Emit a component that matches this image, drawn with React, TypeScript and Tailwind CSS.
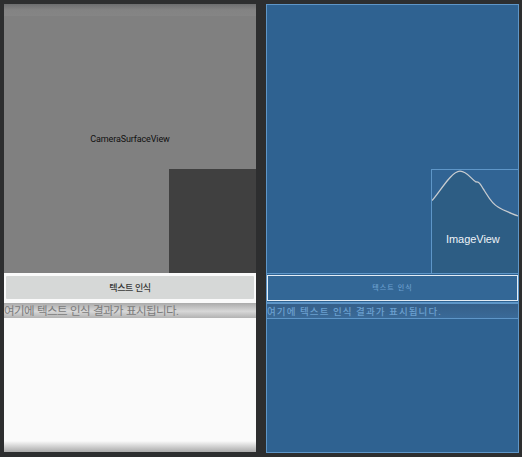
const korean = "font-['Roboto','Noto_Sans_CJK_KR',sans-serif]";

function DesignPreview() {
  return (
    <section className={`flex h-[448px] w-[252px] flex-col overflow-hidden bg-[#fafafa] ${korean}`}>
      <div className="relative flex h-[269px] w-full shrink-0 justify-center bg-[#808080] pt-[129px]">
        <div className="absolute inset-x-0 top-0 h-3 bg-linear-to-b from-[#6d6e6f] via-[#838383] to-[#858585]" />
        <span className="h-3 whitespace-nowrap text-[9px] leading-[12px] tracking-[-0.13px] text-[#101010]">CameraSurfaceView</span>
        <div className="absolute right-0 bottom-0 h-[104px] w-[87px] bg-[#404040]" />
      </div>
      <div className="h-[30px] shrink-0 px-[2px] pt-[3px]">
        <button className="flex h-[23px] w-full items-center justify-center rounded-[1px] bg-[#d6d8d7] pt-px text-[9px] leading-none font-medium tracking-[-0.35px] text-[#383838]">
          <span className="whitespace-nowrap">텍스트 인식</span>
        </button>
      </div>
      <div className="flex h-[15px] shrink-0 items-center bg-linear-to-b from-[#aaaaaa] via-[#d8d8d8] via-55% to-[#b2b2b2]">
        <span className="whitespace-nowrap pt-px text-[11.5px] leading-[15px] tracking-[-0.6px] text-[#7b7b7b] [word-spacing:0.8px]">여기에 텍스트 인식 결과가 표시됩니다.</span>
      </div>
      <div className="grow" />
      <div className="h-[11px] shrink-0 bg-linear-to-b from-[#fafafa] to-[#aaaaaa]" />
    </section>
  );
}

function Blueprint() {
  return (
    <section className={`flex h-[449px] w-[253px] flex-col border border-[#5e96c8] bg-[#2f6291] ${korean}`}>
      <div className="flex h-[269px] shrink-0 items-end justify-end border-b border-[#5e96c8]">
        <div className="relative h-[104px] w-[87px] border-t border-l border-[#5e96c8] bg-[#316494]">
          <svg className="absolute top-0 left-0" width="86" height="103" viewBox="0 0 86 103">
            <path d="M0 30.5C6 25 19 1.2 28 1.2C35 1.2 39 9 44 12C48 11 49 16 52 20C56 26 59 33 66 37C72 41 79 43 86 46V103H0Z" fill="#2d5d84" />
            <path d="M0 30.5C6 25 19 1.2 28 1.2C35 1.2 39 9 44 12C48 11 49 16 52 20C56 26 59 33 66 37C72 41 79 43 86 46" fill="none" stroke="#c8ccd0" strokeWidth="1.3" />
          </svg>
          <span className="absolute top-[62px] left-[14px] font-['Liberation_Sans',sans-serif] text-[11px] leading-[14px] tracking-[-0.05px] text-[#eef3f8]">ImageView</span>
        </div>
      </div>
      <div className="h-[28px] shrink-0 pt-[1px]">
        <div className="flex h-[26px] items-center justify-center border border-[#e5edf5] bg-[#336796] pt-px font-['DejaVu_Sans','Noto_Sans_CJK_KR',sans-serif] text-[7px] leading-none font-medium tracking-[1px] text-[#6b9fce]">
          <span className="whitespace-nowrap">텍스트 인식</span>
        </div>
      </div>
      <div className="flex h-[17px] shrink-0 items-center border-t-2 border-b border-[#5e96c8] bg-linear-to-b from-[#355f89] to-[#3a6a98]">
        <span className="whitespace-nowrap pt-[2px] text-[9.5px] leading-[14px] font-medium tracking-[1.1px] text-[#6ba0d0]">여기에 텍스트 인식 결과가 표시됩니다.</span>
      </div>
    </section>
  );
}

export default function App() {
  return (
    <main className="flex h-[457px] w-[522px] gap-[10px] overflow-hidden bg-[#2d2e2f] pt-1 pl-1">
      <DesignPreview />
      <Blueprint />
    </main>
  );
}
